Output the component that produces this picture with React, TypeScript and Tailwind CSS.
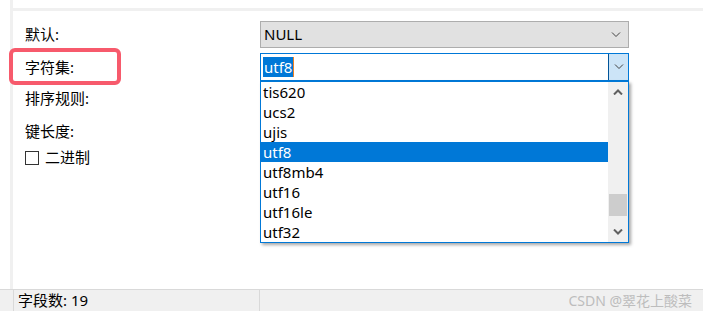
const items = ['tis620', 'ucs2', 'ujis', 'utf8', 'utf8mb4', 'utf16', 'utf16le', 'utf32'];

const Chevron = ({ up = false, bold = false }: { up?: boolean; bold?: boolean }) => (
  <svg width="10" height="6" viewBox="0 0 10 6" className="block">
    <path
      d={up ? 'M1 5.5 L5 1.5 L9 5.5' : 'M1 0.5 L5 4.5 L9 0.5'}
      fill="none"
      stroke={bold ? '#606060' : '#404040'}
      strokeWidth={bold ? 2 : 1}
    />
  </svg>
);

export default function App() {
  const font = { fontFamily: '"Noto Sans", "Noto Sans CJK SC", sans-serif' };

  return (
    <div className="relative flex h-[311px] w-[703px] flex-col overflow-hidden bg-white text-[15px] text-black" style={font}>
      <div className="flex h-[289px]">
        <div className="w-[10px] bg-white" />
        <div className="w-[3px] bg-[#f0f0f0]" />
        <div className="flex flex-1 flex-col">
          <div className="h-[8px] bg-white" />
          <div className="h-[3px] bg-[#f0f0f0]" />

          <div className="mt-[10px] flex flex-col pl-[12px]">
            <div className="flex h-[27px] items-center">
              <span className="w-[235px] leading-none">默认:</span>
              <div className="flex h-[27px] w-[369px] items-center justify-between border border-[#adadad] bg-[#e1e1e1] pl-[3px] pr-[7px]">
                <span className="leading-none">NULL</span>
                <Chevron />
              </div>
            </div>

            <div className="mt-[5px] flex h-[28px] items-center">
              <span className="w-[235px] leading-none">字符集:</span>
              <div className="flex h-[28px] w-[369px] items-stretch border border-[#0078d7]">
                <div className="flex flex-1 items-center pl-[2px]">
                  <span className="flex h-[20px] items-center bg-[#0078d7] px-[1px] leading-none text-white">utf8</span>
                  <span className="h-[20px] w-[1px] bg-[#f08020]" />
                </div>
                <div className="flex w-[20px] items-center justify-center border-l border-[#005499] bg-[#cce4f7]">
                  <Chevron />
                </div>
              </div>
            </div>

            <div className="flex h-[31px] items-end pb-[6px]">
              <span className="leading-none">排序规则:</span>
            </div>
            <div className="flex h-[31px] items-end pb-[4px]">
              <span className="leading-none">键长度:</span>
            </div>
            <div className="mt-[7px] flex items-center gap-[6px]">
              <span className="h-[14px] w-[14px] border border-[#333]" />
              <span className="leading-none">二进制</span>
            </div>
          </div>
        </div>
      </div>

      <div className="flex h-[22px] border-t border-[#d9d9d9] bg-[#f0f0f0]">
        <div className="w-[13px]" />
        <div className="flex w-[246px] items-center border-l border-[#d9d9d9] pl-[4px] text-[15px] leading-none">字段数: 19</div>
        <div className="flex flex-1 items-center justify-end border-l border-[#d9d9d9] pr-[11px] text-[14px] leading-none text-[#bdbdbd]">
          CSDN @翠花上酸菜
        </div>
      </div>

      <div className="pointer-events-none absolute left-[9px] top-[48px] h-[37px] w-[112px] rounded-[6px] border-[4px] border-[#f75a6c]" />

      <div className="absolute left-[260px] top-[81px] flex h-[162px] w-[369px] border border-[#0078d7] bg-white shadow-[2px_2px_3px_rgba(0,0,0,0.35)]">
        <div className="flex flex-1 flex-col">
          {items.map((it) => (
            <div
              key={it}
              className={`flex h-[20px] items-center pl-[2px] leading-none ${it === 'utf8' ? 'bg-[#0078d7] text-white' : ''}`}
            >
              {it}
            </div>
          ))}
        </div>
        <div className="flex w-[20px] flex-col bg-[#f0f0f0]">
          <div className="flex h-[20px] items-center justify-center">
            <Chevron up bold />
          </div>
          <div className="flex-1" />
          <div className="mx-[1px] h-[22px] bg-[#cdcdcd]" />
          <div className="h-[6px]" />
          <div className="flex h-[20px] items-center justify-center">
            <Chevron bold />
          </div>
        </div>
      </div>
    </div>
  );
}
